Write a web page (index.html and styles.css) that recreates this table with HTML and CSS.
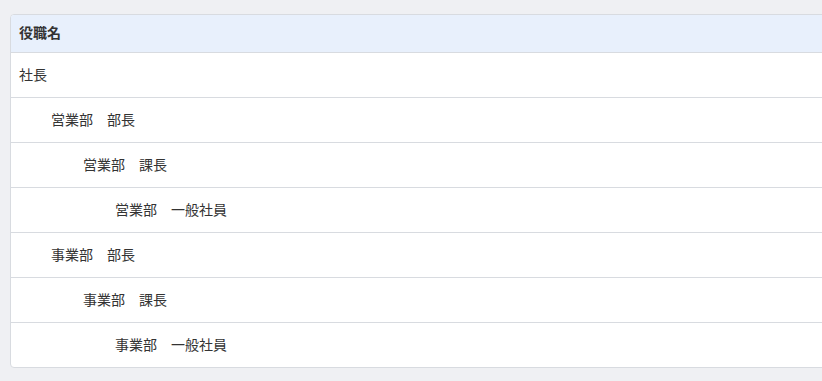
FILE: index.html
```html
<!DOCTYPE html>
<html lang="ja">

<head>
    <meta charset="UTF-8">
    <meta name="viewport" content="width=device-width, initial-scale=1.0">
    <title>役職一覧</title>
    <link rel="stylesheet" href="styles.css">
</head>

<body>
    <div class="card">
        <table class="post-table">
            <thead>
                <tr>
                    <th>役職名</th>
                </tr>
            </thead>
            <tbody>
                <tr><td class="lv0">社長</td></tr>
                <tr><td class="lv1">営業部　部長</td></tr>
                <tr><td class="lv2">営業部　課長</td></tr>
                <tr><td class="lv3">営業部　一般社員</td></tr>
                <tr><td class="lv1">事業部　部長</td></tr>
                <tr><td class="lv2">事業部　課長</td></tr>
                <tr><td class="lv3">事業部　一般社員</td></tr>
            </tbody>
        </table>
    </div>
</body>

</html>
```

FILE: styles.css
```css
body {
    font-family: "Noto Sans CJK JP", "Noto Sans", sans-serif;
    background-color: #eff0f3;
    margin: 0;
    padding: 14px 0 0 10px;
    overflow: hidden;
    color: #333;
}

.card {
    width: 840px;
    background-color: white;
    border: 1px solid #d8dbe0;
    border-radius: 4px;
    overflow: hidden;
}

.post-table {
    width: 100%;
    border-collapse: collapse;
    font-size: 14px;
    line-height: 20px;
}

.post-table th {
    background-color: #e8f0fc;
    text-align: left;
    font-weight: bold;
    height: 34px;
    padding: 0 8px 3px;
    border-bottom: 1px solid #d8dbe0;
}

.post-table td {
    height: 41px;
    padding: 0 8px 3px;
    border-bottom: 1px solid #d8dbe0;
}

.post-table tr:last-child td {
    border-bottom: none;
}

.lv1 { padding-left: 40px !important; }
.lv2 { padding-left: 72px !important; }
.lv3 { padding-left: 104px !important; }
```
